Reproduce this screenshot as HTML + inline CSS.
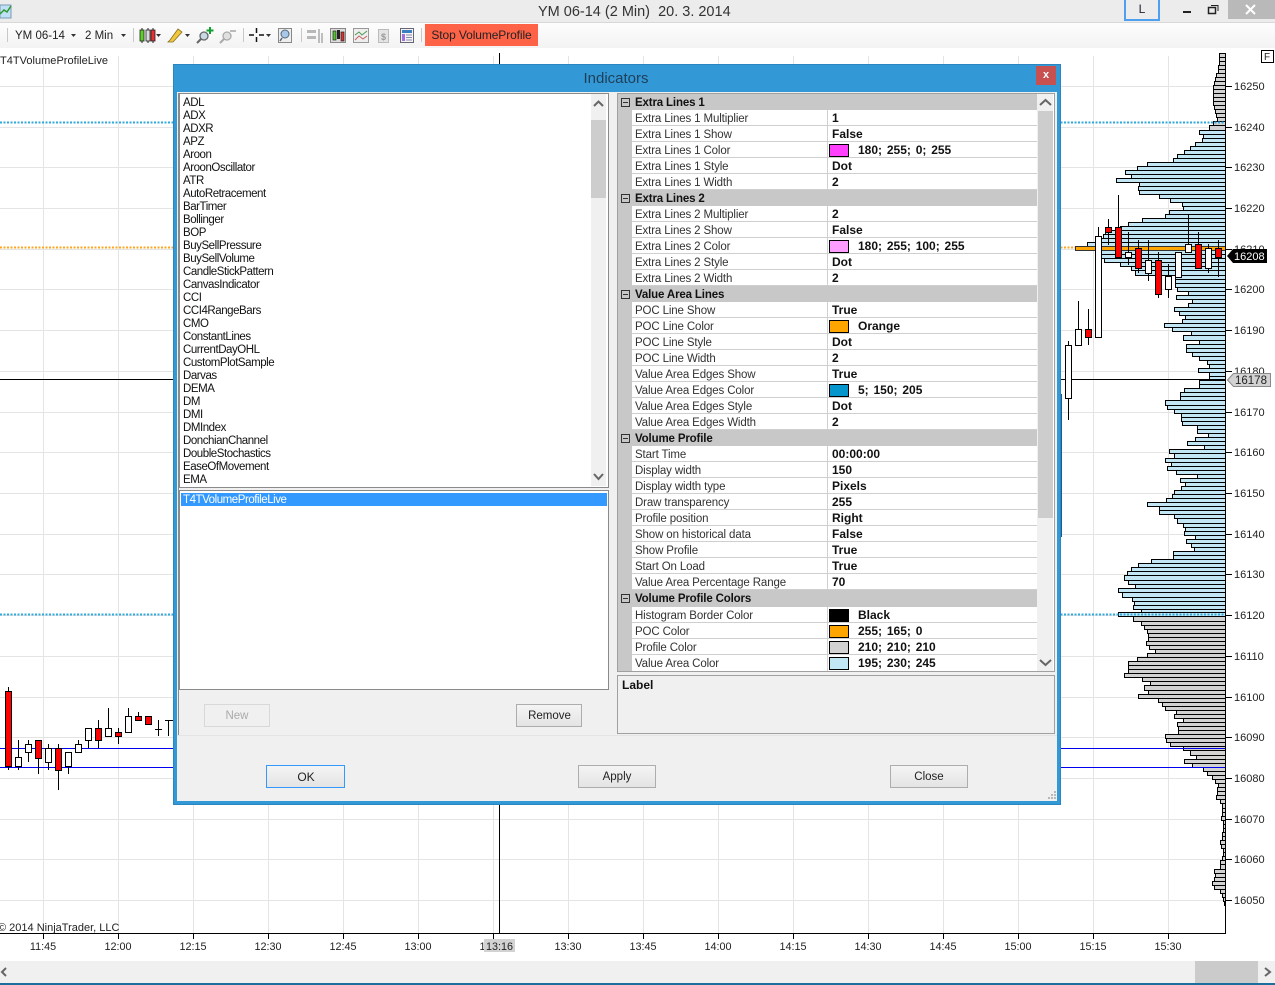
<!DOCTYPE html>
<html><head><meta charset="utf-8"><title>YM 06-14</title>
<style>
html,body{margin:0;padding:0;background:#fff}
body{position:relative;width:1275px;height:985px;overflow:hidden;font-family:"Liberation Sans",sans-serif;color:#222}
.a{position:absolute}
svg{position:absolute;left:0;top:0}
svg text{font-family:"Liberation Sans",sans-serif}
.tb{font-size:11.5px;color:#222;line-height:14px;white-space:pre}
.btn{position:absolute;box-sizing:border-box;border:1px solid #adadad;background:linear-gradient(#f4f4f4,#e4e4e4);text-align:center;font-size:11.5px;line-height:22px;color:#222;height:23px}
.list{position:absolute;left:183px;top:96px;font-size:11.5px;letter-spacing:-.45px;line-height:13px;color:#111;padding-top:1px}
.grid{position:absolute;left:618px;top:94px;width:419px;font-size:11.5px;color:#333}
.h{height:16.03px;line-height:18px;background:#c8c8c8;font-weight:bold;color:#111;padding-left:17px;box-sizing:border-box;position:relative;letter-spacing:-.15px;white-space:nowrap}
.h:before{content:"";position:absolute;left:3px;top:4px;width:7px;height:7px;border:1px solid #333}
.h:after{content:"";position:absolute;left:5px;top:8px;width:5px;height:1px;background:#333}
.r{height:16.03px;line-height:18px;position:relative;box-sizing:border-box;margin-left:14px;padding-left:3px;background:#fff;border-bottom:1px solid #cfcfcf;letter-spacing:-.13px;white-space:nowrap}
.r b{position:absolute;left:195px;top:0;height:16px;line-height:16px;border-left:1px solid #cfcfcf;padding-left:4px;font-size:12px;color:#111;white-space:pre;word-spacing:1.5px;letter-spacing:0}
.r b.c{padding-left:30px}
.r b u{position:absolute;left:1px;top:2px;width:18px;height:11px;border:1px solid #000;text-decoration:none}
</style></head>
<body>
<!-- title bar -->
<div class="a" style="left:0;top:0;width:1275px;height:22px;background:#ececec"></div>
<div class="a" style="left:0;top:22px;width:1275px;height:1px;background:#d8d8d8"></div>
<div class="a" style="left:0;top:23px;width:1275px;height:25px;background:linear-gradient(#fdfdfd,#f3f3f3)"></div>
<div class="a" style="left:538px;top:3px;font-size:14.5px;line-height:18px;color:#333;white-space:pre">YM 06-14 (2 Min)  20. 3. 2014</div>
<div class="a" style="left:1124px;top:0;width:32px;height:19px;border:2px solid #4da0f0;border-top:0;background:#ececec;text-align:center;font-size:12px;line-height:19px;color:#223">L</div>
<div class="a" style="left:1183px;top:11px;width:8px;height:2px;background:#222"></div>
<div class="a" style="left:1228px;top:0;width:47px;height:19px;background:#b9b9b9"></div>
<svg width="1275" height="48">
<rect x="1208.5" y="7.5" width="7" height="6" fill="none" stroke="#222" stroke-width="1.5"/>
<path d="M1211 5.5H1218V11" fill="none" stroke="#222"/>
<path d="M1246 5L1255 14M1255 5L1246 14" stroke="#fff" stroke-width="2"/>
<rect x="0" y="5" width="11" height="13" fill="#bfe0f5" stroke="#7a9ab5"/>
<path d="M0 14L4 10L7 12L11 6" stroke="#2a9a2a" fill="none" stroke-width="1.5"/>
<!-- separators -->
<path d="M7.5 28V42M133.5 28V42M243.5 28V42M301.5 28V42M421.5 28V42" stroke="#c8c8c8"/>
<!-- carets -->
<path d="M71 34h5l-2.500 3zM121 34h5l-2.500 3zM156 34h5l-2.500 3zM185 34h5l-2.500 3zM266 34h5l-2.500 3z" fill="#333"/>
<!-- candle icon -->
<path d="M142 28V43M148 28V43M153 28V43" stroke="#222"/>
<rect x="140" y="30" width="4" height="11" fill="#5fd02a" stroke="#222" stroke-width=".8"/>
<rect x="146" y="30" width="4" height="11" fill="#ddd" stroke="#222" stroke-width=".8"/>
<rect x="151" y="30" width="4" height="11" fill="#e83030" stroke="#222" stroke-width=".8"/>
<!-- pencil -->
<path d="M170 40L178 29L182 32L173 42L168 42Z" fill="#f0c83c" stroke="#8a7020" stroke-width=".8"/>
<!-- magnifier plus -->
<circle cx="204" cy="36" r="4" fill="#c8d8e4" stroke="#666" stroke-width="1.300"/>
<path d="M201 39L197 43" stroke="#666" stroke-width="2"/>
<path d="M210 27V34M206.500 30.500H213.500" stroke="#10a030" stroke-width="2"/>
<circle cx="227" cy="36" r="4" fill="#e0e0e0" stroke="#aaa" stroke-width="1.300"/>
<path d="M224 39L220 43" stroke="#aaa" stroke-width="2"/>
<path d="M230 31H236" stroke="#bbb" stroke-width="2"/>
<!-- crosshair -->
<path d="M256.500 28V33M256.500 37V42M249 35H254M259 35H264" stroke="#111" stroke-width="1.500"/>
<!-- zoom page -->
<rect x="278.500" y="28.500" width="13" height="14" fill="#eee" stroke="#888"/>
<circle cx="285" cy="34" r="4" fill="#a8c8ea" stroke="#567"/>
<path d="M282 38L280 41" stroke="#567" stroke-width="1.500"/>
<!-- tools -->
<path d="M307 30H316V33H307ZM307 36H316V39H307Z" fill="#b8b8b8"/><path d="M319 29V43M322 33V43" stroke="#aaa" stroke-width="1.500"/>
<rect x="330.500" y="28.500" width="15" height="14" fill="#ddd" stroke="#888"/>
<rect x="333" y="31" width="3" height="9" fill="#50c828" stroke="#222" stroke-width=".7"/><rect x="337" y="30" width="3" height="9" fill="#222"/><rect x="341" y="32" width="3" height="9" fill="#e03030" stroke="#222" stroke-width=".7"/>
<rect x="353.500" y="28.500" width="15" height="14" fill="#eee" stroke="#999"/>
<path d="M355 35L359 32L362 35L367 31" fill="none" stroke="#4a9a50"/><path d="M355 40L359 36L363 39L367 36" fill="none" stroke="#c86060"/>
<rect x="378.500" y="29.500" width="10" height="13" fill="#e4e4e4" stroke="#bbb"/>
<text x="381" y="40" font-size="9" fill="#999" font-weight="bold">$</text>
<rect x="400.500" y="28.500" width="13" height="14" fill="#f4f4f4" stroke="#667"/>
<rect x="402" y="30" width="10" height="3" fill="#3a80c0"/><rect x="402" y="34" width="3" height="7" fill="#a070e0"/><path d="M406 35H412M406 37.500H412M406 40H412" stroke="#88a"/>
</svg>
<div class="a tb" style="left:15px;top:29px">YM 06-14</div>
<div class="a tb" style="left:85px;top:29px">2 Min</div>
<div class="a" style="left:425px;top:24px;width:113px;height:22px;background:#ff6347;text-align:center;font-size:12px;line-height:23px;color:#222;letter-spacing:-.1px">Stop VolumeProfile</div>

<!-- chart -->
<svg width="1275" height="985" style="top:0;left:0">
<g stroke="#e4e4e4" stroke-width="1" fill="none">
<path d="M43.500 56V933M118.500 56V933M193.500 56V933M268.500 56V933M343.500 56V933M418.500 56V933M493.500 56V933M568.500 56V933M643.500 56V933M718.500 56V933M793.500 56V933M868.500 56V933M943.500 56V933M1018.500 56V933M1093.500 56V933M1168.500 56V933"/>
<path d="M0 86.500H1225M0 127.500H1225M0 167.500H1225M0 208.500H1225M0 249.500H1225M0 289.500H1225M0 330.500H1225M0 371.500H1225M0 412.500H1225M0 452.500H1225M0 493.500H1225M0 534.500H1225M0 574.500H1225M0 615.500H1225M0 656.500H1225M0 697.500H1225M0 737.500H1225M0 778.500H1225M0 819.500H1225M0 859.500H1225M0 900.500H1225"/>
</g>
<!-- gray top -->
<path fill="#d2d2d2" stroke="#000" d="M1219.500 53.500H1225.500v4H1219.500zM1219.500 57.500H1225.500v4H1219.500zM1219.500 61.500H1225.500v4H1219.500zM1218.500 65.500H1225.500v4H1218.500zM1218.500 69.500H1225.500v4H1218.500zM1216.500 73.500H1225.500v4H1216.500zM1215.500 77.500H1225.500v4H1215.500zM1214.500 81.500H1225.500v4H1214.500zM1213.500 85.500H1225.500v4H1213.500zM1213.500 89.500H1225.500v4H1213.500zM1213.500 93.500H1225.500v4H1213.500zM1213.500 97.500H1225.500v4H1213.500zM1213.500 101.500H1225.500v4H1213.500zM1214.500 105.500H1225.500v4H1214.500zM1215.500 109.500H1225.500v4H1215.500zM1216.500 113.500H1225.500v4H1216.500zM1217.500 117.500H1225.500v4H1217.500zM1213.500 121.500H1225.500v4H1213.500zM1209.500 125.500H1225.500v5H1209.500z"/>
<!-- blue -->
<path fill="#c3e6f5" stroke="#000" d="M1199.500 130.500H1225.500v4H1199.500zM1203.500 134.500H1225.500v4H1203.500zM1202.500 138.500H1225.500v4H1202.500zM1195.500 142.500H1225.500v4H1195.500zM1190.500 146.500H1225.500v4H1190.500zM1184.500 150.500H1225.500v4H1184.500zM1177.500 154.500H1225.500v4H1177.500zM1173.500 158.500H1225.500v4H1173.500zM1147.500 162.500H1225.500v4H1147.500zM1137.500 166.500H1225.500v4H1137.500zM1125.500 170.500H1225.500v4H1125.500zM1131.500 174.500H1225.500v4H1131.500zM1116.500 178.500H1225.500v4H1116.500zM1139.500 182.500H1225.500v4H1139.500zM1138.500 186.500H1225.500v4H1138.500zM1139.500 190.500H1225.500v4H1139.500zM1159.500 194.500H1225.500v4H1159.500zM1170.500 198.500H1225.500v4H1170.500zM1182.500 202.500H1225.500v4H1182.500zM1183.500 206.500H1225.500v4H1183.500zM1169.500 210.500H1225.500v4H1169.500zM1165.500 214.500H1225.500v4H1165.500zM1142.500 218.500H1225.500v4H1142.500zM1128.500 222.500H1225.500v4H1128.500zM1120.500 226.500H1225.500v4H1120.500zM1105.500 230.500H1225.500v4H1105.500zM1103.500 234.500H1225.500v4H1103.500zM1095.500 238.500H1225.500v4H1095.500zM1087.500 242.500H1225.500v4H1087.500zM1095.500 250.500H1225.500v4H1095.500zM1095.500 254.500H1225.500v4H1095.500zM1104.500 258.500H1225.500v4H1104.500zM1120.500 262.500H1225.500v4H1120.500zM1131.500 266.500H1225.500v4H1131.500zM1135.500 270.500H1225.500v5H1135.500zM1175.500 275.500H1225.500v4H1175.500zM1175.500 279.500H1225.500v4H1175.500zM1175.500 283.500H1225.500v4H1175.500zM1177.500 287.500H1225.500v4H1177.500zM1188.500 291.500H1225.500v4H1188.500zM1176.500 295.500H1225.500v4H1176.500zM1192.500 299.500H1225.500v4H1192.500zM1188.500 303.500H1225.500v4H1188.500zM1174.500 307.500H1225.500v4H1174.500zM1179.500 311.500H1225.500v4H1179.500zM1185.500 315.500H1225.500v4H1185.500zM1182.500 319.500H1225.500v4H1182.500zM1164.500 323.500H1225.500v4H1164.500zM1172.500 327.500H1225.500v4H1172.500zM1191.500 331.500H1225.500v4H1191.500zM1183.500 335.500H1225.500v5H1183.500zM1199.500 340.500H1225.500v4H1199.500zM1186.500 344.500H1225.500v4H1186.500zM1186.500 348.500H1225.500v4H1186.500zM1192.500 352.500H1225.500v4H1192.500zM1199.500 356.500H1225.500v4H1199.500zM1207.500 360.500H1225.500v4H1207.500zM1209.500 364.500H1225.500v4H1209.500zM1198.500 368.500H1225.500v4H1198.500zM1209.500 372.500H1225.500v4H1209.500zM1209.500 376.500H1225.500v4H1209.500zM1199.500 380.500H1225.500v4H1199.500zM1199.500 384.500H1225.500v4H1199.500zM1184.500 388.500H1225.500v4H1184.500zM1180.500 392.500H1225.500v4H1180.500zM1180.500 396.500H1225.500v4H1180.500zM1165.500 400.500H1225.500v5H1165.500zM1167.500 405.500H1225.500v4H1167.500zM1174.500 409.500H1225.500v4H1174.500zM1181.500 413.500H1225.500v4H1181.500zM1181.500 417.500H1225.500v4H1181.500zM1182.500 421.500H1225.500v4H1182.500zM1197.500 425.500H1225.500v4H1197.500zM1197.500 429.500H1225.500v4H1197.500zM1208.500 433.500H1225.500v4H1208.500zM1195.500 437.500H1225.500v4H1195.500zM1187.500 441.500H1225.500v4H1187.500zM1204.500 445.500H1225.500v4H1204.500zM1169.500 449.500H1225.500v4H1169.500zM1174.500 453.500H1225.500v5H1174.500zM1165.500 458.500H1225.500v4H1165.500zM1171.500 462.500H1225.500v4H1171.500zM1167.500 466.500H1225.500v4H1167.500zM1176.500 470.500H1225.500v4H1176.500zM1197.500 474.500H1225.500v4H1197.500zM1180.500 478.500H1225.500v4H1180.500zM1185.500 482.500H1225.500v4H1185.500zM1181.500 486.500H1225.500v4H1181.500zM1174.500 490.500H1225.500v4H1174.500zM1172.500 494.500H1225.500v4H1172.500zM1166.500 498.500H1225.500v4H1166.500zM1147.500 502.500H1225.500v4H1147.500zM1159.500 506.500H1225.500v4H1159.500zM1159.500 510.500H1225.500v4H1159.500zM1174.500 514.500H1225.500v4H1174.500zM1177.500 518.500H1225.500v5H1177.500zM1183.500 523.500H1225.500v4H1183.500zM1185.500 527.500H1225.500v4H1185.500zM1184.500 531.500H1225.500v4H1184.500zM1195.500 535.500H1225.500v4H1195.500zM1186.500 539.500H1225.500v4H1186.500zM1191.500 543.500H1225.500v4H1191.500zM1194.500 547.500H1225.500v4H1194.500zM1173.500 551.500H1225.500v4H1173.500zM1173.500 555.500H1225.500v4H1173.500zM1151.500 559.500H1225.500v4H1151.500zM1138.500 563.500H1225.500v4H1138.500zM1131.500 567.500H1225.500v4H1131.500zM1127.500 571.500H1225.500v4H1127.500zM1124.500 575.500H1225.500v5H1124.500zM1128.500 580.500H1225.500v4H1128.500zM1135.500 584.500H1225.500v4H1135.500zM1118.500 588.500H1225.500v4H1118.500zM1122.500 592.500H1225.500v5H1122.500zM1132.500 597.500H1225.500v4H1132.500zM1134.500 601.500H1225.500v4H1134.500zM1133.500 605.500H1225.500v4H1133.500zM1141.500 609.500H1225.500v3H1141.500zM1118.500 612.500H1225.500v4H1118.500z"/>
<!-- gray bottom -->
<path fill="#d2d2d2" stroke="#000" d="M1133.500 616.500H1225.500v5H1133.500zM1141.500 621.500H1225.500v4H1141.500zM1144.500 625.500H1225.500v4H1144.500zM1147.500 629.500H1225.500v4H1147.500zM1148.500 633.500H1225.500v4H1148.500zM1148.500 637.500H1225.500v4H1148.500zM1146.500 641.500H1225.500v4H1146.500zM1149.500 645.500H1225.500v4H1149.500zM1155.500 649.500H1225.500v4H1155.500zM1147.500 653.500H1225.500v4H1147.500zM1137.500 657.500H1225.500v4H1137.500zM1128.500 661.500H1225.500v4H1128.500zM1128.500 665.500H1225.500v4H1128.500zM1128.500 669.500H1225.500v4H1128.500zM1124.500 673.500H1225.500v4H1124.500zM1142.500 677.500H1225.500v4H1142.500zM1150.500 681.500H1225.500v4H1150.500zM1144.500 685.500H1225.500v5H1144.500zM1148.500 690.500H1225.500v4H1148.500zM1138.500 694.500H1225.500v4H1138.500zM1158.500 698.500H1225.500v4H1158.500zM1162.500 702.500H1225.500v4H1162.500zM1165.500 706.500H1225.500v4H1165.500zM1176.500 710.500H1225.500v4H1176.500zM1174.500 714.500H1225.500v4H1174.500zM1183.500 718.500H1225.500v4H1183.500zM1177.500 722.500H1225.500v4H1177.500zM1178.500 726.500H1225.500v4H1178.500zM1178.500 730.500H1225.500v4H1178.500zM1165.500 734.500H1225.500v4H1165.500zM1166.500 738.500H1225.500v4H1166.500zM1170.500 742.500H1225.500v4H1170.500zM1183.500 746.500H1225.500v4H1183.500zM1190.500 750.500H1225.500v5H1190.500zM1196.500 755.500H1225.500v4H1196.500zM1184.500 759.500H1225.500v4H1184.500zM1192.500 763.500H1225.500v4H1192.500zM1203.500 767.500H1225.500v4H1203.500zM1207.500 771.500H1225.500v4H1207.500zM1212.500 775.500H1225.500v4H1212.500zM1215.500 779.500H1225.500v4H1215.500zM1218.500 783.500H1225.500v4H1218.500zM1217.500 787.500H1225.500v4H1217.500zM1217.500 791.500H1225.500v4H1217.500zM1216.500 795.500H1225.500v4H1216.500zM1220.500 799.500H1225.500v4H1220.500zM1222.500 803.500H1225.500v5H1222.500zM1222.500 808.500H1225.500v4H1222.500zM1222.500 812.500H1225.500v4H1222.500zM1221.500 816.500H1225.500v4H1221.500zM1223.500 820.500H1225.500v4H1223.500zM1223.500 824.500H1225.500v4H1223.500zM1223.500 828.500H1225.500v4H1223.500zM1222.500 832.500H1225.500v4H1222.500zM1222.500 836.500H1225.500v4H1222.500zM1220.500 840.500H1225.500v4H1220.500zM1221.500 844.500H1225.500v4H1221.500zM1223.500 848.500H1225.500v4H1223.500zM1223.500 852.500H1225.500v4H1223.500zM1222.500 856.500H1225.500v4H1222.500zM1220.500 860.500H1225.500v4H1220.500zM1220.500 864.500H1225.500v5H1220.500zM1214.500 869.500H1225.500v4H1214.500zM1215.500 873.500H1225.500v4H1215.500zM1214.500 877.500H1225.500v4H1214.500zM1212.500 881.500H1225.500v4H1212.500zM1214.500 885.500H1225.500v4H1214.500zM1220.500 889.500H1225.500v4H1220.500zM1222.500 893.500H1225.500v4H1222.500zM1223.500 897.500H1225.500v4H1223.500zM1224.500 901.500H1225.500v4H1224.500z"/>
<!-- POC -->
<rect x="1075.500" y="246.500" width="150" height="4" fill="#ffa500" stroke="#333"/>
<!-- lines -->
<path d="M0 748.500H1226M0 767.500H1226" stroke="#0000ee" fill="none"/>
<path d="M0 379.500H1226M499.500 53V933" stroke="#000" fill="none"/>
<path d="M0 122.500H1226M0 614.500H1226" stroke="#2fa8dc" stroke-width="2" stroke-dasharray="2 1.500" fill="none"/>
<path d="M0 247.500H1075" stroke="#ffa520" stroke-width="2" stroke-dasharray="2 1.500" fill="none"/>
<!-- candles wicks -->
<path stroke="#000" fill="none" d="M1068.500 341V420M1078.500 301V345M1088.500 309V345M1098.500 227V337M1108.500 219V245M1118.500 195V257M1128.500 232V265M1138.500 240V273M1148.500 240V281M1158.500 252V298M1168.500 264V298M1188.500 215V252M1198.500 232V268M1208.500 244V273M1218.500 240V277M8.500 687V770M18.500 740V770M28.500 740V762M38.500 740V774M48.500 744V770M58.500 744V790M68.500 752V774M78.500 740V752M88.500 728V748M98.500 720V748M108.500 708V736M118.500 728V744M128.500 708V732M138.500 712V720M158.500 720V736M168.500 720V736M155 729.500H162M165 720.500H173"/>
<!-- white bodies -->
<path fill="#fff" stroke="#000" d="M1065.500 345.500h6v53h-6zM1075.500 329.500h6v16h-6zM1095.500 236.500h6v101h-6zM1125.500 252.500h6v5h-6zM1145.500 260.500h6v13h-6zM1165.500 276.500h6v13h-6zM1175.500 252.500h6v25h-6zM1185.500 244.500h6v8h-6zM1205.500 248.500h6v20h-6zM15.500 757.500h6v9h-6zM25.500 744.500h6v8h-6zM45.500 748.500h6v14h-6zM65.500 752.500h6v14h-6zM75.500 744.500h6v8h-6zM85.500 728.500h6v12h-6zM105.500 728.500h6v8h-6zM125.500 716.500h6v16h-6z"/>
<!-- red bodies -->
<path fill="#f00" stroke="#000" d="M1085.500 329.500h6v8h-6zM1105.500 227.500h6v5h-6zM1115.500 227.500h6v30h-6zM1135.500 248.500h6v20h-6zM1155.500 260.500h6v34h-6zM1195.500 244.500h6v24h-6zM1215.500 248.500h6v9h-6zM5.500 691.500h6v75h-6zM35.500 740.500h6v18h-6zM55.500 748.500h6v22h-6zM95.500 728.500h6v12h-6zM115.500 732.500h6v4h-6zM135.500 716.500h6v4h-6zM145.500 716.500h6v8h-6z"/>
<!-- axes -->
<path stroke="#000" fill="none" d="M1225.500 53V933.500H0M1226 86.500h6M1226 127.500h6M1226 167.500h6M1226 208.500h6M1226 249.500h6M1226 289.500h6M1226 330.500h6M1226 371.500h6M1226 412.500h6M1226 452.500h6M1226 493.500h6M1226 534.500h6M1226 574.500h6M1226 615.500h6M1226 656.500h6M1226 697.500h6M1226 737.500h6M1226 778.500h6M1226 819.500h6M1226 859.500h6M1226 900.500h6M43.500 934v5M118.500 934v5M193.500 934v5M268.500 934v5M343.500 934v5M418.500 934v5M493.500 934v5M568.500 934v5M643.500 934v5M718.500 934v5M793.500 934v5M868.500 934v5M943.500 934v5M1018.500 934v5M1093.500 934v5M1168.500 934v5"/>
<g font-size="11" fill="#222">
<text x="1234" y="90">16250</text><text x="1234" y="131">16240</text><text x="1234" y="171">16230</text><text x="1234" y="212">16220</text><text x="1234" y="253">16210</text><text x="1234" y="293">16200</text><text x="1234" y="334">16190</text><text x="1234" y="375">16180</text><text x="1234" y="416">16170</text><text x="1234" y="456">16160</text><text x="1234" y="497">16150</text><text x="1234" y="538">16140</text><text x="1234" y="578">16130</text><text x="1234" y="619">16120</text><text x="1234" y="660">16110</text><text x="1234" y="701">16100</text><text x="1234" y="741">16090</text><text x="1234" y="782">16080</text><text x="1234" y="823">16070</text><text x="1234" y="863">16060</text><text x="1234" y="904">16050</text>
</g>
<g font-size="10.800" fill="#222" text-anchor="middle">
<text x="43" y="950">11:45</text><text x="118" y="950">12:00</text><text x="193" y="950">12:15</text><text x="268" y="950">12:30</text><text x="343" y="950">12:45</text><text x="418" y="950">13:00</text><text x="493" y="950">13:15</text><text x="568" y="950">13:30</text><text x="643" y="950">13:45</text><text x="718" y="950">14:00</text><text x="793" y="950">14:15</text><text x="868" y="950">14:30</text><text x="943" y="950">14:45</text><text x="1018" y="950">15:00</text><text x="1093" y="950">15:15</text><text x="1168" y="950">15:30</text>
</g>
<rect x="484" y="939" width="31" height="13" fill="#d2d2d2"/>
<text x="499.500" y="950" font-size="10.800" fill="#222" text-anchor="middle">13:16</text>
<!-- tags -->
<path d="M1227 256L1233 249H1267V263H1233Z" fill="#000"/>
<text x="1234" y="260" font-size="11" fill="#fff">16208</text>
<path d="M1227.500 380L1233.500 373.500H1270.500V386.500H1233.500Z" fill="#d2d2d2" stroke="#8a8a8a"/>
<text x="1235" y="384" font-size="11.500" fill="#222">16178</text>
<text x="0" y="64" font-size="11" fill="#222" textLength="108">T4TVolumeProfileLive</text>
<text x="-2" y="931" font-size="11" fill="#222">© 2014 NinjaTrader, LLC</text>
<rect x="1261.500" y="50.500" width="12" height="12" fill="#fff" stroke="#000"/>
<text x="1264" y="60" font-size="10" fill="#222">F</text>
</svg>
<!-- bottom scrollbar -->
<div class="a" style="left:0;top:961px;width:1275px;height:22px;background:#f0f0f0"></div>
<div class="a" style="left:1195px;top:961px;width:63px;height:22px;background:#cbcbcb"></div>
<div class="a" style="left:0;top:983px;width:1275px;height:2px;background:#1c6f9c"></div>
<svg width="1275" height="985" style="pointer-events:none">
<path d="M6 968L2 972L6 976M1265 968L1270 972L1265 976" fill="none" stroke="#666" stroke-width="2"/>
</svg>
<div class="a" style="left:1060px;top:394px;width:2px;height:143px;background:#1a5c90"></div>

<!-- dialog -->
<div class="a" style="left:173px;top:64px;width:888px;height:741px;background:#3398d6;box-shadow:inset 0 0 0 1px #2a85c0"></div>
<div class="a" style="left:177px;top:92px;width:880px;height:709px;background:#f0f0f0"></div>
<div class="a" style="left:176px;top:70px;width:880px;text-align:center;font-size:15px;line-height:18px;color:#1f3f58">Indicators</div>
<div class="a" style="left:1036px;top:66px;width:20px;height:19px;background:#c75050;color:#fff;text-align:center;font-size:11px;font-weight:bold;line-height:18px">x</div>

<!-- left lists -->
<div class="a" style="left:178px;top:93px;width:1px;height:642px;background:#8a8a8a"></div>
<div class="a" style="left:179px;top:93px;width:428px;height:393px;background:#fff;border:1px solid #8a8a8a"></div>
<div class="a" style="left:591px;top:94px;width:15px;height:392px;background:#f0f0f0"></div>
<div class="a" style="left:591px;top:120px;width:15px;height:78px;background:#cdcdcd"></div>
<div class="list">ADL<br>ADX<br>ADXR<br>APZ<br>Aroon<br>AroonOscillator<br>ATR<br>AutoRetracement<br>BarTimer<br>Bollinger<br>BOP<br>BuySellPressure<br>BuySellVolume<br>CandleStickPattern<br>CanvasIndicator<br>CCI<br>CCI4RangeBars<br>CMO<br>ConstantLines<br>CurrentDayOHL<br>CustomPlotSample<br>Darvas<br>DEMA<br>DM<br>DMI<br>DMIndex<br>DonchianChannel<br>DoubleStochastics<br>EaseOfMovement<br>EMA</div>
<div class="a" style="left:179px;top:490px;width:428px;height:198px;background:#fff;border:1px solid #8a8a8a"></div>
<div class="a" style="left:181px;top:493px;width:426px;height:13px;background:#3399ff;color:#fff;font-size:11.500px;letter-spacing:-.45px;line-height:15px;padding-left:2px;box-sizing:border-box;overflow:hidden">T4TVolumeProfileLive</div>
<div class="btn" style="left:204px;top:704px;width:66px;color:#aaa;border-color:#d8d8d8;background:#f0f0f0">New</div>
<div class="btn" style="left:516px;top:704px;width:66px;padding-left:1px">Remove</div>
<div class="a" style="left:177px;top:735px;width:880px;height:1px;background:#e4e4e4"></div>

<!-- grid -->
<div class="a" style="left:617px;top:93px;width:436px;height:577px;background:#fff;border:1px solid #a0a0a0"></div>
<div class="a" style="left:1037px;top:94px;width:16px;height:577px;background:#f0f0f0"></div>
<div class="a" style="left:1038px;top:111px;width:15px;height:407px;background:#cdcdcd"></div>
<div class="a" style="left:618px;top:94px;width:14px;height:577px;background:#c8c8c8"></div>
<div class="grid">
<div class="h">Extra Lines 1</div>
<div class="r">Extra Lines 1 Multiplier<b>1</b></div>
<div class="r">Extra Lines 1 Show<b>False</b></div>
<div class="r">Extra Lines 1 Color<b class="c"><u style="background:#ff40ff"></u>180; 255; 0; 255</b></div>
<div class="r">Extra Lines 1 Style<b>Dot</b></div>
<div class="r">Extra Lines 1 Width<b>2</b></div>
<div class="h">Extra Lines 2</div>
<div class="r">Extra Lines 2 Multiplier<b>2</b></div>
<div class="r">Extra Lines 2 Show<b>False</b></div>
<div class="r">Extra Lines 2 Color<b class="c"><u style="background:#ff9cff"></u>180; 255; 100; 255</b></div>
<div class="r">Extra Lines 2 Style<b>Dot</b></div>
<div class="r">Extra Lines 2 Width<b>2</b></div>
<div class="h">Value Area Lines</div>
<div class="r">POC Line Show<b>True</b></div>
<div class="r">POC Line Color<b class="c"><u style="background:#ffa500"></u>Orange</b></div>
<div class="r">POC Line Style<b>Dot</b></div>
<div class="r">POC Line Width<b>2</b></div>
<div class="r">Value Area Edges Show<b>True</b></div>
<div class="r">Value Area Edges Color<b class="c"><u style="background:#0596cd"></u>5; 150; 205</b></div>
<div class="r">Value Area Edges Style<b>Dot</b></div>
<div class="r">Value Area Edges Width<b>2</b></div>
<div class="h">Volume Profile</div>
<div class="r">Start Time<b>00:00:00</b></div>
<div class="r">Display width<b>150</b></div>
<div class="r">Display width type<b>Pixels</b></div>
<div class="r">Draw transparency<b>255</b></div>
<div class="r">Profile position<b>Right</b></div>
<div class="r">Show on historical data<b>False</b></div>
<div class="r">Show Profile<b>True</b></div>
<div class="r">Start On Load<b>True</b></div>
<div class="r">Value Area Percentage Range<b>70</b></div>
<div class="h">Volume Profile Colors</div>
<div class="r">Histogram Border Color<b class="c"><u style="background:#000"></u>Black</b></div>
<div class="r">POC Color<b class="c"><u style="background:#ffa500"></u>255; 165; 0</b></div>
<div class="r">Profile Color<b class="c"><u style="background:#d2d2d2"></u>210; 210; 210</b></div>
<div class="r" style="border-bottom:0">Value Area Color<b class="c"><u style="background:#c3e6f5"></u>195; 230; 245</b></div>
</div>
<div class="a" style="left:617px;top:675px;width:436px;height:57px;border:1px solid #a0a0a0;background:#f0f0f0;font-size:12px;font-weight:bold;color:#111;line-height:18px"><span style="margin-left:4px">Label</span></div>

<div class="btn" style="left:266px;top:765px;width:79px;border:1px solid #3399ff;font-size:12px;padding-left:1px">OK</div>
<div class="btn" style="left:578px;top:765px;width:78px">Apply</div>
<div class="btn" style="left:890px;top:765px;width:78px">Close</div>

<svg width="1275" height="985" style="pointer-events:none">
<path d="M594 106L598.500 101.500L603 106M594 474L598.500 479L603 474M1040 105L1045.500 100L1051 105M1040 660L1045.500 665L1051 660" fill="none" stroke="#666" stroke-width="2"/>
<path d="M1054 791h2v2h-2zM1051 794h2v2h-2zM1054 794h2v2h-2zM1048 797h2v2h-2zM1051 797h2v2h-2zM1054 797h2v2h-2z" fill="#b8b8b8"/>
</svg>
</body></html>
